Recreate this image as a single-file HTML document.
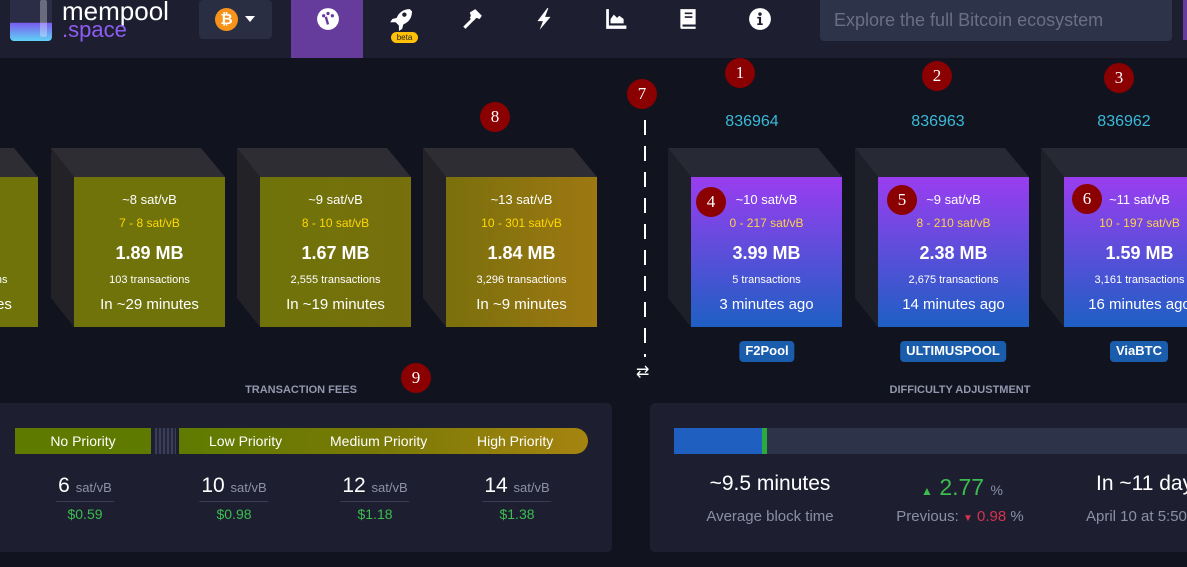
<!DOCTYPE html>
<html><head><style>
*{margin:0;padding:0;box-sizing:border-box}
body{width:1187px;height:567px;overflow:hidden;background:#11131f;font-family:"Liberation Sans",sans-serif;position:relative;color:#fff}
.abs{position:absolute}
.hdr{left:0;top:0;width:1187px;height:58px;background:#1d1f31}
.blk{position:absolute;top:148px;width:174px;height:179px}
.blk .top{position:absolute;left:0;top:0;width:174px;height:29px;background:#2d2d33;clip-path:polygon(0 0,150px 0,174px 29px,23px 29px)}
.blk .side{position:absolute;left:0;top:0;width:23px;height:179px;background:#232227;clip-path:polygon(0 0,23px 29px,23px 179px,0 150px)}
.blk .front{position:absolute;left:23px;top:29px;width:151px;height:150px;text-align:center;overflow:hidden}
.m .top{background:#272a35}.m .side{background:#1e2029}
.front div{white-space:nowrap}
.front .a{font-size:13px;line-height:16px;margin-top:15px;color:#fff}
.front .b{font-size:12px;line-height:16px;margin-top:7px;color:#ffd800}
.front .c{font-size:18px;line-height:22px;font-weight:bold;margin-top:11px}
.front .d{font-size:11px;line-height:14px;margin-top:9px}
.front .e{font-size:15px;line-height:18px;margin-top:9px}
.y{background:#6f730a}
.p{background:linear-gradient(#9a3df0,#1e5fc4)}
.p .b{color:#ffd24a}
.tag{position:absolute;top:341px;height:21px;background:#1a5dad;border-radius:4px;font-size:13px;font-weight:bold;padding:2px 6px;transform:translateX(-50%)}
.hgt{position:absolute;top:113px;color:#3bb9d8;font-size:16px;transform:translateX(-50%)}
.mk{position:absolute;width:30px;height:30px;border-radius:50%;background:#8b0000;color:#fff;font-family:"Liberation Serif",serif;font-size:17px;text-align:center;line-height:30px;transform:translate(-50%,-50%)}
.panel{position:absolute;top:403px;height:149px;background:#1d1f31;border-radius:5px}
.ttl{position:absolute;top:384px;font-size:11px;font-weight:bold;color:#9497ad;transform:translateX(-50%)}
.fee{position:absolute;top:474px;text-align:center;transform:translateX(-50%)}
.fee .n{font-size:21px;border-bottom:1px solid #3a3d52;padding:0 2px 3px}
.fee .n span{font-size:13px;color:#8e91a6}
.fee .u{color:#3bbd4f;font-size:14px;margin-top:4px}
.ico{position:absolute;top:7px;width:24px;height:24px;fill:#fff}
</style></head><body>
<div class="abs hdr"></div>
<div class="abs" style="left:10px;top:0;width:42px;height:41px;border-radius:0 0 4px 4px;background:linear-gradient(#2a2d45 55%,#7b5cf0 56%,#5fd3f5)"></div>
<div class="abs" style="left:40px;top:0;width:7px;height:37px;background:rgba(255,255,255,.3);border-radius:2px"></div>
<div class="abs" style="left:62px;top:-4px;font-size:26px;color:#fff">mempool</div>
<div class="abs" style="left:62px;top:18px;font-size:22px;color:#8e5cf0;line-height:24px">.space</div>
<div class="abs" style="left:199px;top:0;width:73px;height:39px;background:#2a2e43;border-radius:4px"></div>
<div class="abs" style="left:215px;top:8px;width:23px;height:23px;border-radius:50%;background:#f7931a;color:#fff;font-weight:bold;font-size:15px;text-align:center;line-height:23px">₿</div>
<div class="abs" style="left:245px;top:16px;border:5px solid transparent;border-top:6px solid #fff"></div>
<div class="abs" style="left:291px;top:0;width:72px;height:58px;background:#653b9c"></div>
<svg class="ico" style="left:316px" viewBox="0 0 22 22"><circle cx="11" cy="11" r="10"/><circle cx="7" cy="8" r="1.5" fill="#653b9c"/><circle cx="11" cy="6" r="1.5" fill="#653b9c"/><circle cx="15" cy="8" r="1.5" fill="#653b9c"/><path d="M11 16 L9 9" stroke="#653b9c" stroke-width="2.2"/></svg>
<svg class="ico" style="left:388px" viewBox="0 0 22 22"><path d="M20 2c-6 0-10 3-12 8l-4 1-2 3 5 0 3 3 0 5 3-2 1-4c5-2 8-6 8-12z"/><circle cx="15" cy="7" r="2" fill="#1d1f31"/></svg>
<div class="abs" style="left:391px;top:32px;width:27px;height:11px;background:#ffc107;border-radius:6px;font-size:8px;color:#222;text-align:center;line-height:11px">beta</div>
<svg class="ico" style="left:460px" viewBox="0 0 22 22"><path d="M3 18l9-9 2 2-9 9z"/><path d="M9 5l5-3 6 6-2 3-3-1-3 3-3-3 1-2z"/></svg>
<svg class="ico" style="left:532px" viewBox="0 0 22 22"><path d="M14 1L5 13h5l-3 8 10-12h-5l3-8z"/></svg>
<svg class="ico" style="left:604px" viewBox="0 0 22 22"><path d="M2 2h2.5v15h16v3H2z"/><path d="M6 15v-4l3-4 3 3 2-2 4 3v4z"/></svg>
<svg class="ico" style="left:676px" viewBox="0 0 22 22"><path d="M4 2h14v14H6v2h12v2H5c-1 0-1-1-1-2z"/><path d="M8 5h7v1.5H8zM8 8.5h7V10H8z" fill="#1d1f31"/></svg>
<svg class="ico" style="left:748px" viewBox="0 0 22 22"><circle cx="11" cy="11" r="10"/><circle cx="11" cy="6.5" r="1.6" fill="#1d1f31"/><path d="M8.5 9h3.5v6h1.5v1.5h-5V15H10v-4.5H8.5z" fill="#1d1f31"/></svg>
<div class="abs" style="left:820px;top:0;width:352px;height:41px;background:#2d3348;border-radius:0 0 4px 4px;color:#6b6f85;font-size:18px;padding:10px 14px">Explore the full Bitcoin ecosystem</div>
<div class="abs" style="left:1183px;top:0;width:4px;height:40px;background:#653b9c"></div>

<div class="blk" style="left:-136px"><div class="top"></div><div class="side"></div><div class="front y"><div class="a">~7 sat/vB</div><div class="b">6 - 7 sat/vB</div><div class="c">1.99 MB</div><div class="d">3,000 transactions</div><div class="e">In ~39 minutes</div></div></div>
<div class="blk" style="left:51px"><div class="top"></div><div class="side"></div><div class="front y"><div class="a">~8 sat/vB</div><div class="b">7 - 8 sat/vB</div><div class="c">1.89 MB</div><div class="d">103 transactions</div><div class="e">In ~29 minutes</div></div></div>
<div class="blk" style="left:237px"><div class="top"></div><div class="side"></div><div class="front" style="background:linear-gradient(90deg,#6f730a,#77700c)"><div class="a">~9 sat/vB</div><div class="b">8 - 10 sat/vB</div><div class="c">1.67 MB</div><div class="d">2,555 transactions</div><div class="e">In ~19 minutes</div></div></div>
<div class="blk" style="left:423px"><div class="top"></div><div class="side"></div><div class="front" style="background:linear-gradient(90deg,#7a700c,#9e7812)"><div class="a">~13 sat/vB</div><div class="b">10 - 301 sat/vB</div><div class="c">1.84 MB</div><div class="d">3,296 transactions</div><div class="e">In ~9 minutes</div></div></div>

<div class="abs" style="left:644px;top:120px;width:2px;height:237px;background:repeating-linear-gradient(#fff 0 15px,transparent 15px 26px)"></div>
<div class="abs" style="left:636px;top:362px;font-size:16px;color:#fff">⇄</div>

<div class="blk m" style="left:668px"><div class="top"></div><div class="side"></div><div class="front p"><div class="a">~10 sat/vB</div><div class="b">0 - 217 sat/vB</div><div class="c">3.99 MB</div><div class="d">5 transactions</div><div class="e">3 minutes ago</div></div></div>
<div class="blk m" style="left:855px"><div class="top"></div><div class="side"></div><div class="front p"><div class="a">~9 sat/vB</div><div class="b">8 - 210 sat/vB</div><div class="c">2.38 MB</div><div class="d">2,675 transactions</div><div class="e">14 minutes ago</div></div></div>
<div class="blk m" style="left:1041px;width:146px;overflow:hidden"><div class="top"></div><div class="side"></div><div class="front p"><div class="a">~11 sat/vB</div><div class="b">10 - 197 sat/vB</div><div class="c">1.59 MB</div><div class="d">3,161 transactions</div><div class="e">16 minutes ago</div></div></div>
<div class="hgt" style="left:752px">836964</div>
<div class="hgt" style="left:938px">836963</div>
<div class="hgt" style="left:1124px">836962</div>
<div class="tag" style="left:767px">F2Pool</div>
<div class="tag" style="left:953px">ULTIMUSPOOL</div>
<div class="tag" style="left:1139px">ViaBTC</div>

<div class="ttl" style="left:301px">TRANSACTION FEES</div>
<div class="panel" style="left:0;width:612px;border-radius:0 5px 5px 0"></div>
<div class="abs" style="left:15px;top:428px;width:136px;height:26px;background:#5e7b00;font-size:14px;text-align:center;line-height:26px">No Priority</div>
<div class="abs" style="left:155px;top:428px;width:21px;height:26px;background:repeating-linear-gradient(90deg,#3a3e58 0 2px,#22253a 2px 4px)"></div>
<div class="abs" style="left:179px;top:428px;width:409px;height:26px;background:linear-gradient(90deg,#5e7b00,#7a7a06 50%,#a68410);border-radius:0 13px 13px 0;font-size:14px;line-height:26px">
<span class="abs" style="left:30px">Low Priority</span><span class="abs" style="left:151px">Medium Priority</span><span class="abs" style="left:298px">High Priority</span></div>
<div class="fee" style="left:85px"><div class="n">6 <span>sat/vB</span></div><div class="u">$0.59</div></div>
<div class="fee" style="left:234px"><div class="n">10 <span>sat/vB</span></div><div class="u">$0.98</div></div>
<div class="fee" style="left:375px"><div class="n">12 <span>sat/vB</span></div><div class="u">$1.18</div></div>
<div class="fee" style="left:517px"><div class="n">14 <span>sat/vB</span></div><div class="u">$1.38</div></div>

<div class="ttl" style="left:960px">DIFFICULTY ADJUSTMENT</div>
<div class="panel" style="left:650px;width:537px;border-radius:5px 0 0 5px"></div>
<div class="abs" style="left:674px;top:428px;width:513px;height:26px;background:#2d3348"></div>
<div class="abs" style="left:674px;top:428px;width:88px;height:26px;background:#1f5fc0"></div>
<div class="abs" style="left:762px;top:428px;width:5px;height:26px;background:#2bab3f"></div>
<div class="abs" style="left:770px;top:472px;font-size:21px;transform:translateX(-50%);white-space:nowrap">~9.5 minutes</div>
<div class="abs" style="left:770px;top:508px;font-size:15px;color:#8c8fa3;transform:translateX(-50%);white-space:nowrap">Average block time</div>
<div class="abs" style="left:962px;top:474px;font-size:23px;color:#3bbd4f;transform:translateX(-50%);white-space:nowrap"><span style="font-size:12px">▲</span> 2.77 <span style="font-size:14px;color:#8c8fa3">%</span></div>
<div class="abs" style="left:960px;top:508px;font-size:15px;color:#8c8fa3;transform:translateX(-50%);white-space:nowrap">Previous: <span style="color:#d5334c;font-size:10px">▼</span> <span style="color:#d5334c">0.98</span> %</div>
<div class="abs" style="left:1096px;top:472px;width:91px;overflow:hidden;font-size:21px;white-space:nowrap">In ~11 days</div>
<div class="abs" style="left:1086px;top:508px;width:101px;overflow:hidden;font-size:15px;color:#8c8fa3;white-space:nowrap">April 10 at 5:50 PM</div>

<div class="mk" style="left:740px;top:73px">1</div>
<div class="mk" style="left:937px;top:76px">2</div>
<div class="mk" style="left:1119px;top:78px">3</div>
<div class="mk" style="left:711px;top:202px">4</div>
<div class="mk" style="left:902px;top:200px">5</div>
<div class="mk" style="left:1087px;top:199px">6</div>
<div class="mk" style="left:642px;top:94px">7</div>
<div class="mk" style="left:495px;top:117px">8</div>
<div class="mk" style="left:416px;top:378px">9</div>
</body></html>
